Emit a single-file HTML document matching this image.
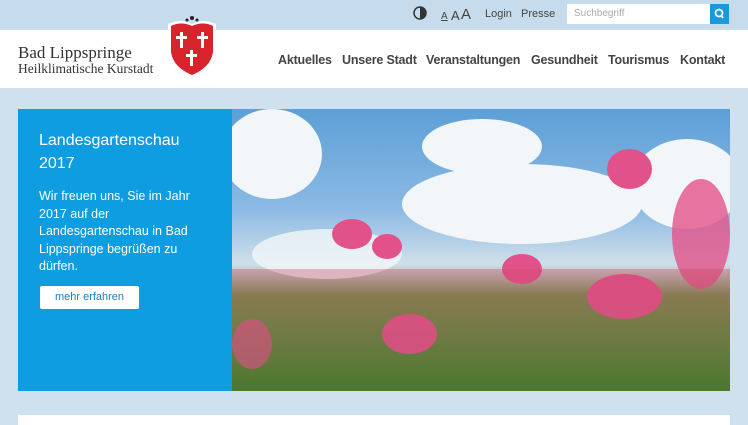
<!DOCTYPE html>
<html><head><meta charset="utf-8"><style>
*{margin:0;padding:0;box-sizing:border-box}
body{width:748px;height:421px;overflow:hidden;background:#cfe1ee;font-family:"Liberation Sans",sans-serif;position:relative}
.top{position:absolute;left:0;top:0;width:748px;height:30px;background:#c6dcec}
.hdr{position:absolute;left:0;top:30px;width:748px;height:58px;background:#fff}
.logo1{position:absolute;left:18px;top:43px;font-family:"Liberation Serif",serif;font-size:17px;color:#333}
.logo2{position:absolute;left:18px;top:61px;font-family:"Liberation Serif",serif;font-size:13.5px;color:#333}
.nav{position:absolute;top:53px;font-size:12.5px;color:#444;font-weight:bold;letter-spacing:-0.2px}
.tl{position:absolute;top:8px;font-size:11px;color:#444}
.search{position:absolute;left:567px;top:4px;width:162px;height:20px;background:#fff}
.search span{position:absolute;left:7px;top:4px;font-size:10px;color:#aaa}
.sbtn{position:absolute;right:0;top:0;width:19px;height:20px;background:#1a9ad9}
.box{position:absolute;left:18px;top:109px;width:215px;height:282px;background:#0e9de0;color:#fff}
.photo{position:absolute;left:232px;top:109px;width:498px;height:282px;overflow:hidden;
background:linear-gradient(180deg,#5d9fd6 0%,#8ab9e4 35%,#cfdfe9 55%,#6f8f4a 66%,#4d7a2e 100%)}
.c{position:absolute;border-radius:50%;background:#f2f6f9}
.f{position:absolute;border-radius:50%;background:#e2528a}
.bottom{position:absolute;left:18px;top:415px;width:712px;height:10px;background:#fff}
</style></head><body>
<div class="top"></div>
<div class="hdr"></div>
<div class="logo1">Bad Lippspringe</div>
<div class="logo2">Heilklimatische Kurstadt</div>
<svg style="position:absolute;left:164px;top:12px" width="56" height="68" viewBox="0 0 56 68">
<path d="M4 12 Q16 6 28 12 Q40 6 52 12 L52 40 Q50 58 28 66 Q6 58 4 40 Z" fill="#fff"/>
<path d="M7 14 Q17 9 28 14 Q39 9 49 14 L49 40 Q47 55 28 63 Q9 55 7 40 Z" fill="#d8222c"/>
<circle cx="28" cy="6" r="2" fill="#222"/><circle cx="23" cy="8" r="1.5" fill="#222"/><circle cx="33" cy="8" r="1.5" fill="#222"/>
<g fill="#fff"><rect x="16" y="20" width="3" height="16"/><rect x="12" y="24" width="11" height="3"/>
<rect x="37" y="20" width="3" height="16"/><rect x="33" y="24" width="11" height="3"/>
<rect x="26" y="38" width="3" height="16"/><rect x="22" y="42" width="11" height="3"/></g></svg>
<svg style="position:absolute;left:413px;top:6px" width="14" height="14"><circle cx="7" cy="7" r="6" fill="none" stroke="#333" stroke-width="1.5"/><path d="M7 1 A6 6 0 0 1 7 13 Z" fill="#333"/></svg>
<div class="tl" style="left:441px;top:11px;font-size:10px;text-decoration:underline">A</div>
<div class="tl" style="left:451px;top:8px;font-size:13px">A</div>
<div class="tl" style="left:461px;top:6px;font-size:15px">A</div>
<div class="tl" style="left:485px">Login</div>
<div class="tl" style="left:521px">Presse</div>
<div class="search"><span>Suchbegriff</span><div class="sbtn"><svg width="19" height="20"><circle cx="9" cy="9" r="3.5" fill="none" stroke="#fff" stroke-width="1.8"/><path d="M11 11 L13 14" stroke="#fff" stroke-width="1.8"/></svg></div></div>
<div class="nav" style="left:278px">Aktuelles</div>
<div class="nav" style="left:342px">Unsere Stadt</div>
<div class="nav" style="left:426px">Veranstaltungen</div>
<div class="nav" style="left:531px">Gesundheit</div>
<div class="nav" style="left:608px">Tourismus</div>
<div class="nav" style="left:680px">Kontakt</div>
<div class="box">
<div style="position:absolute;left:21px;top:20px;font-size:16px;line-height:23px">Landesgartenschau<br>2017</div>
<div style="position:absolute;left:21px;top:79px;font-size:12.5px;line-height:17.5px">Wir freuen uns, Sie im Jahr<br>2017 auf der<br>Landesgartenschau in Bad<br>Lippspringe begrüßen zu<br>dürfen.</div>
<div style="position:absolute;left:22px;top:177px;width:99px;height:23px;background:#fff;border-radius:2px;color:#1a7fc0;font-size:11px;text-align:center;line-height:23px">mehr erfahren</div>
</div>
<div class="photo">
<div class="c" style="left:-10px;top:0;width:100px;height:90px"></div>
<div class="c" style="left:190px;top:10px;width:120px;height:55px"></div>
<div class="c" style="left:170px;top:55px;width:240px;height:80px"></div>
<div class="c" style="left:20px;top:120px;width:150px;height:50px;opacity:.8"></div>
<div class="c" style="left:400px;top:30px;width:110px;height:90px"></div>
<div class="f" style="left:100px;top:110px;width:40px;height:30px"></div>
<div class="f" style="left:140px;top:125px;width:30px;height:25px"></div>
<div class="f" style="left:375px;top:40px;width:45px;height:40px"></div>
<div class="f" style="left:440px;top:70px;width:58px;height:110px;opacity:.8"></div>
<div class="f" style="left:355px;top:165px;width:75px;height:45px"></div>
<div class="f" style="left:150px;top:205px;width:55px;height:40px"></div>
<div class="f" style="left:270px;top:145px;width:40px;height:30px"></div>
<div class="f" style="left:0;top:210px;width:40px;height:50px;opacity:.7"></div>
<div style="position:absolute;left:0;top:160px;width:498px;height:122px;background:linear-gradient(180deg,rgba(210,70,110,.35),rgba(60,110,40,.15))"></div>
</div>
<div class="bottom"></div>
</body></html>
